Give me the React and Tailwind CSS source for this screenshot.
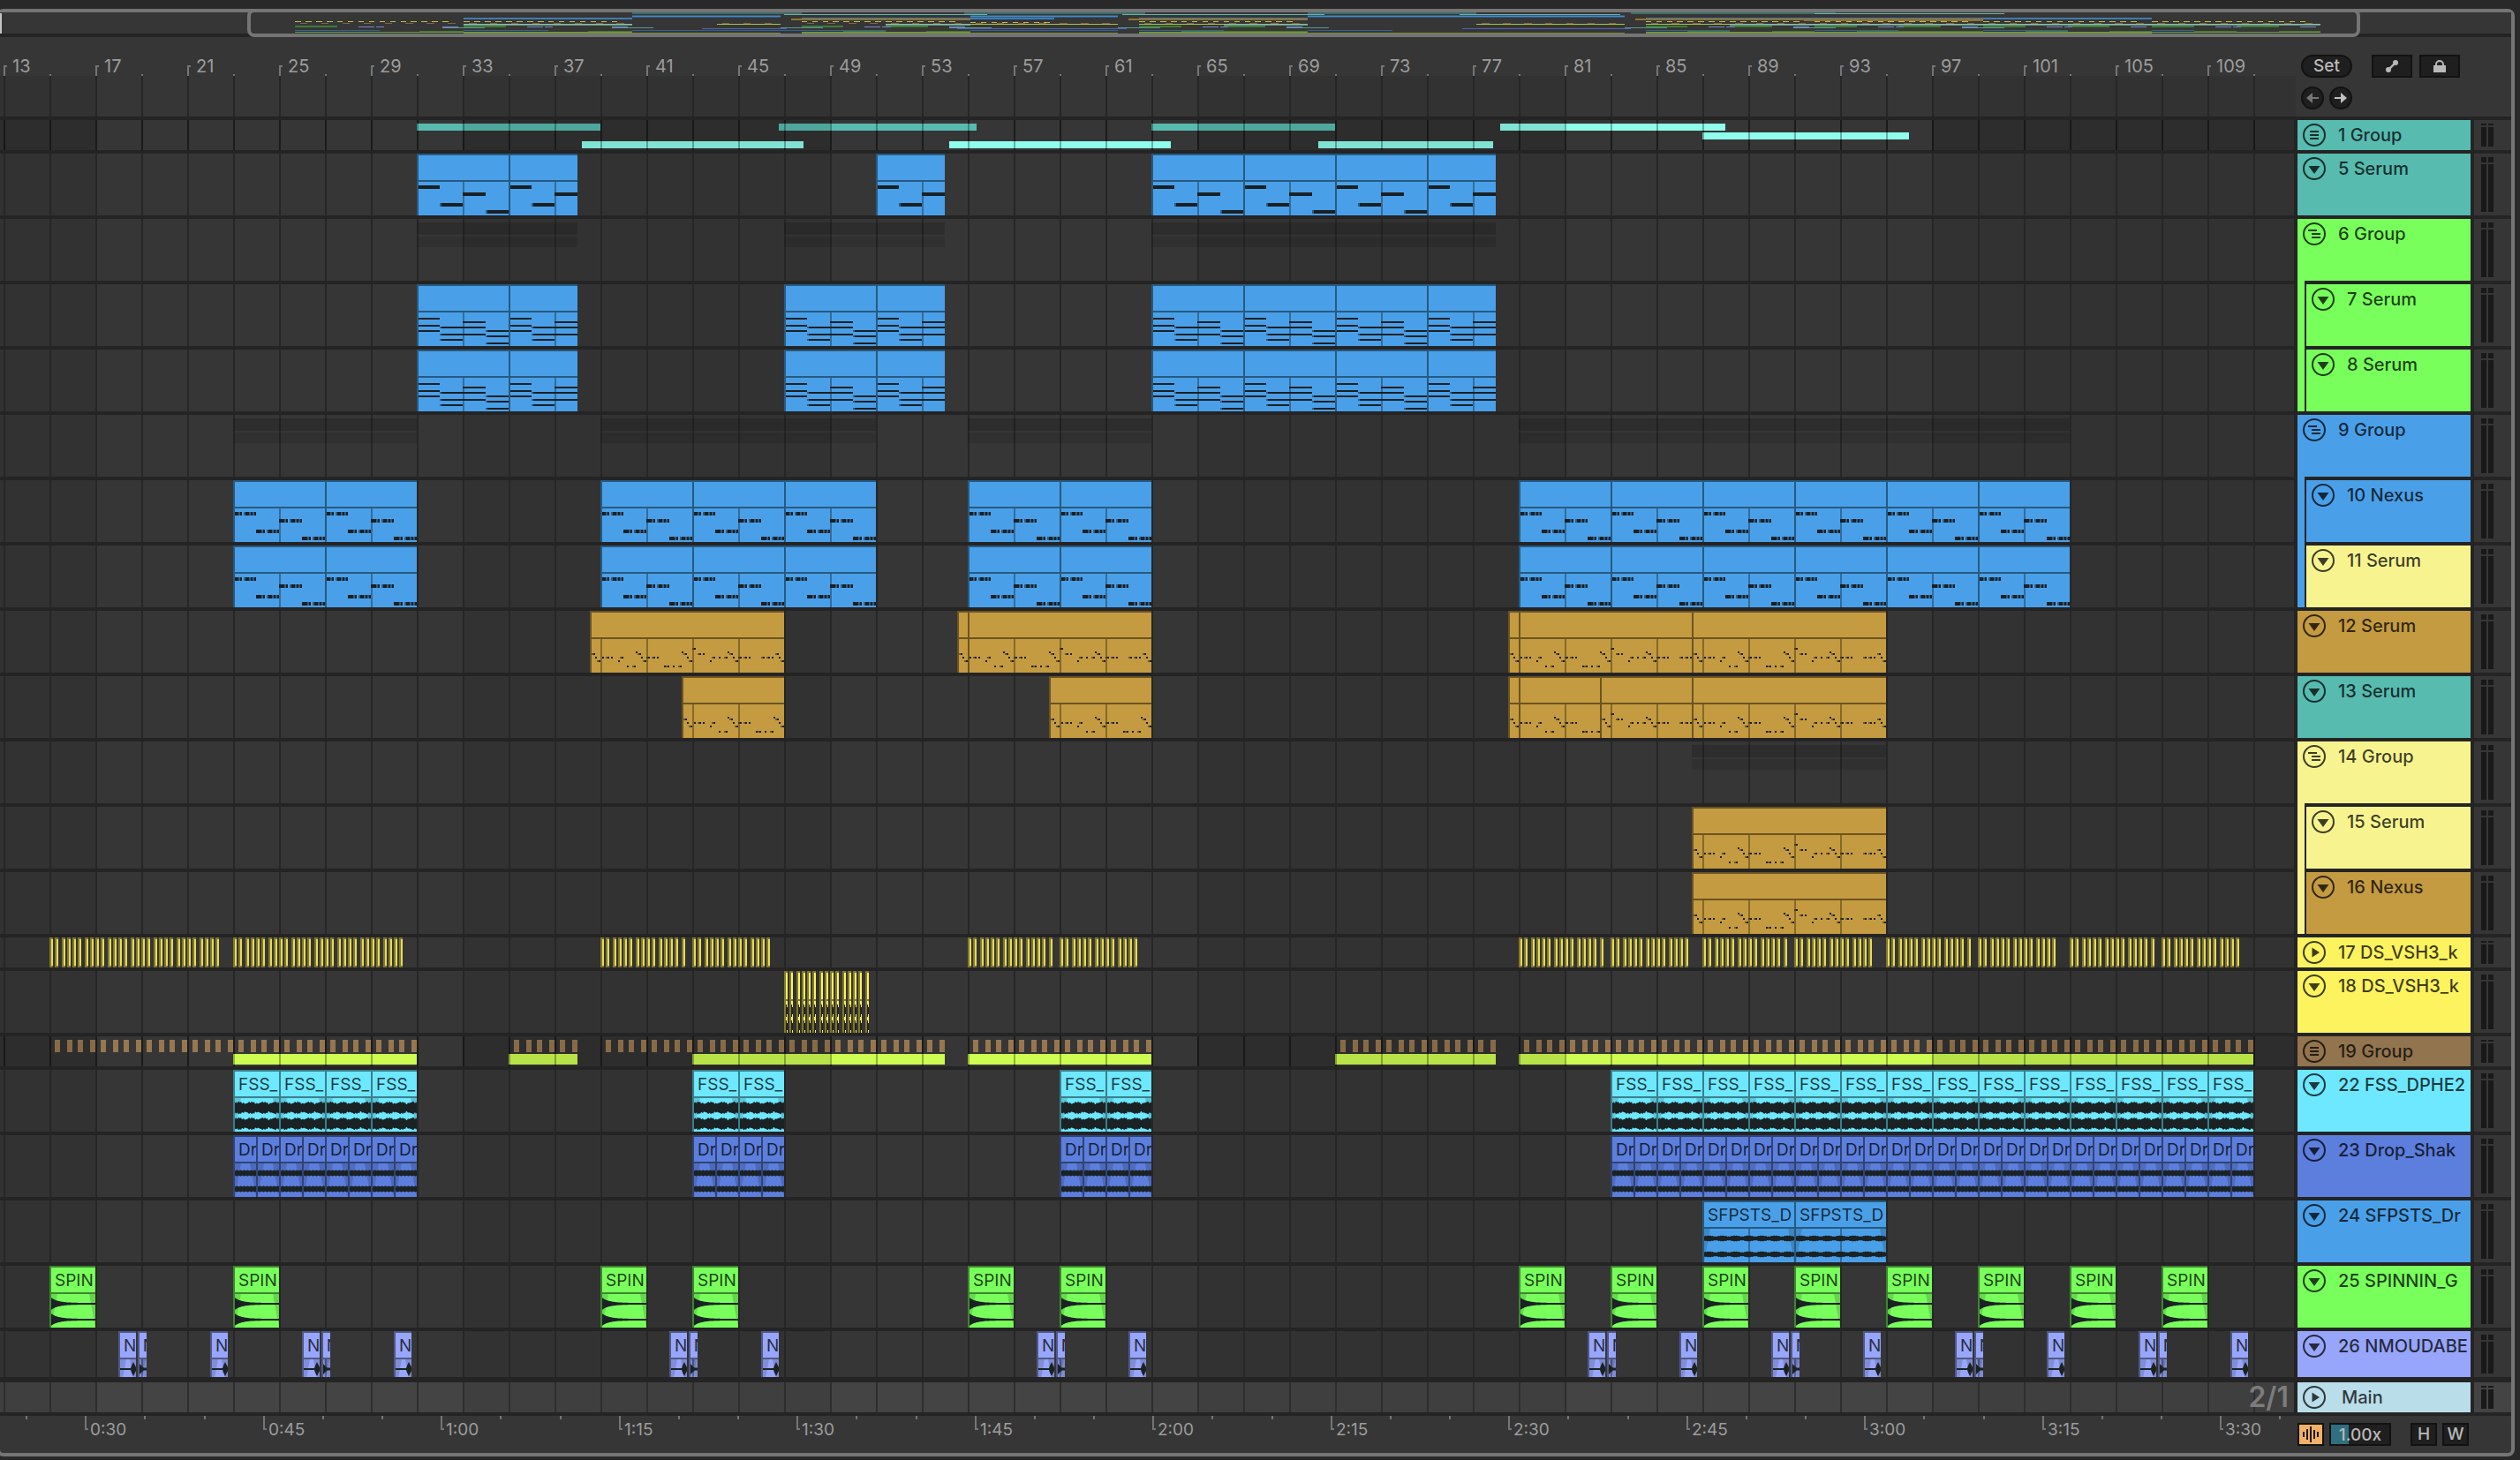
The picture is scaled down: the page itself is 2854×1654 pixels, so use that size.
import clsx from "clsx";

const BAR = 26;
const FIRST_BAR = 13;
const ORIGIN = 4;

const barX = (bar) => ORIGIN + (bar - FIRST_BAR) * BAR;
const even = (n) => Math.round(n / 2) * 2;

const GRID =
  "bg-[repeating-linear-gradient(90deg,transparent_0_4px,#262626_4px_6px,transparent_6px_52px),repeating-linear-gradient(90deg,#323232_0_108px,#363636_108px_524px,#323232_524px_832px)]";
const GRID_MAIN =
  "bg-[repeating-linear-gradient(90deg,transparent_0_4px,#2e2e2e_4px_6px,transparent_6px_52px),repeating-linear-gradient(90deg,#3f3f3f_0_108px,#444444_108px_524px,#3f3f3f_524px_832px)]";
// laid over group overviews, where the grid shows through the clips
const GRID_OVERLAY =
  "bg-[repeating-linear-gradient(90deg,transparent_0_4px,rgba(0,0,0,0.3)_4px_6px,transparent_6px_52px),repeating-linear-gradient(90deg,rgba(0,0,0,0.1)_0_108px,transparent_108px_524px,rgba(0,0,0,0.1)_524px_832px)]";

const TONES = {
  teal: "bg-[#57bbb0]",
  green: "bg-[#79ff5b]",
  blue: "bg-[#4aa0e8]",
  cream: "bg-[#f7f490]",
  gold: "bg-[#c49b40]",
  yellow: "bg-[#fcf35f]",
  brown: "bg-[#92744f]",
  cyan: "bg-[#6ee8ff]",
  indigo: "bg-[#5c7edd]",
  lilac: "bg-[#97a6fa]",
  ice: "bg-[#b9dde9]",
};

const EDGES = {
  blue: "border-[#265a80]",
  gold: "border-[#6b5423]",
  cyan: "border-[#3a7f8c]",
  indigo: "border-[#304376]",
  green: "border-[#3f8530]",
  lilac: "border-[#505886]",
};

/* ---------- notes and waveforms ---------- */

// [x, y, width, height, dim?], x counted from the start of the pattern
const BASS = {
  bars: 4,
  notes: [
    [0, 36, 26, 4], [26, 56, 2, 4, 1], [28, 56, 24, 4],
    [52, 44, 26, 4], [78, 64, 2, 4, 1], [80, 64, 24, 4],
  ],
};

const chord = (x, ys, pick) =>
  ys.flatMap((y) => (pick ? [[x, y, 2, 2, 1], [x + 2, y, 24, 2]] : [[x, y, 26, 2]]));

const CHORDS = {
  bars: 4,
  notes: [
    ...chord(0, [38, 46, 52]),
    ...chord(26, [48, 56, 62], true),
    ...chord(52, [42, 48, 56]),
    ...chord(78, [52, 58, 66], true),
  ],
};

const stabs = (x, y) => [
  [x, y, 6, 4], [x + 6, y, 2, 4, 1], [x + 8, y, 2, 4], [x + 12, y, 2, 4, 1], [x + 14, y, 4, 4],
  [x + 18, y, 2, 4, 1], [x + 20, y, 2, 4], [x + 22, y, 2, 4, 1], [x + 24, y, 2, 4],
];

const STABS = {
  bars: 4,
  notes: [...stabs(0, 36), ...stabs(26, 56), ...stabs(52, 44), ...stabs(78, 64)],
};

const LEAD_ON = [
  [2, 52], [8, 52], [12, 52], [20, 56], [24, 52], [30, 62], [38, 62], [40, 46], [44, 48], [46, 52],
  [50, 56], [54, 52], [60, 52], [64, 52], [72, 62], [76, 62], [82, 62], [90, 62], [92, 46], [96, 48],
  [98, 52], [102, 56], [106, 42], [112, 48], [116, 48], [124, 56], [128, 52], [134, 52], [142, 52],
  [144, 46], [148, 48], [150, 52], [154, 56], [158, 52], [164, 52], [168, 52], [184, 52], [190, 52],
  [194, 52], [200, 48], [202, 52], [206, 56],
];
const LEAD_DIM = [
  [6, 52], [22, 52], [36, 62], [42, 48], [48, 56], [52, 52], [58, 52], [74, 62], [88, 62], [94, 48],
  [100, 56], [104, 42], [110, 48], [126, 52], [140, 52], [146, 48], [152, 56], [156, 52], [162, 52],
  [182, 52], [188, 52], [198, 48], [204, 56],
];

const LEAD = {
  bars: 8,
  notes: [
    ...LEAD_ON.map(([x, y]) => [x, y, 2, 2]),
    ...LEAD_DIM.map(([x, y]) => [x, y, 2, 2, 1]),
  ],
};

function Notes({ pattern, from, to, anchor }) {
  const width = (to - from) * BAR;
  const loop = pattern.bars * BAR;
  const shift = (from - anchor) * BAR;
  const start = Math.floor(shift / loop);
  const end = Math.ceil((shift + width) / loop);
  const rects = [];
  for (let n = start; n < end; n++) {
    pattern.notes.forEach(([x, y, w, h, dim], i) => {
      const left = n * loop + x - shift;
      if (left + w > 2 && left < width) {
        const cut = Math.max(left, 2);
        rects.push(
          <rect key={`${n}-${i}`} x={cut} y={y} width={w - (cut - left)} height={h} fill={dim ? "rgba(0,0,0,0.42)" : "#1a2023"} />
        );
      }
    });
  }
  return (
    <svg className="absolute left-0 top-0 h-full w-full" shapeRendering="crispEdges">
      {rects}
    </svg>
  );
}

// symmetric outline round a centre line
function outline(width, mid, amp) {
  const top = [];
  const bottom = [];
  for (let x = 2; x <= width; x++) {
    const a = amp(x, width);
    top.push(`${x},${(mid - a).toFixed(1)}`);
    bottom.unshift(`${x},${(mid + a).toFixed(1)}`);
  }
  return [...top, ...bottom].join(" ");
}

const WAVES = {
  fss: {
    mids: [43, 61],
    amp: (x) => 4.2 + 2.2 * Math.abs(Math.sin(x * 0.23)) + (x % 3 === 0 ? 1 : 0) - (x % 5 === 0 ? 1 : 0),
  },
  drop: { mids: [43, 61], amp: (x) => 2.7 + (x % 4 < 2 ? 0.8 : 0) },
  loop: { mids: [43, 61], amp: (x) => 1.8 + 1.2 * Math.abs(Math.sin(x * 0.21)) + (x % 3 === 0 ? 0.6 : 0) },
  spin: { mids: [43, 61], amp: (x) => 1 + 7.5 * Math.exp(-x / 8) },
  hit: { mids: [43], amp: (x, w) => (w < 14 ? Math.max(1.5, 8 - x) : x > w - 6 ? 8 - 2 * Math.abs(w - 3 - x) : 1) },
};

function Wave({ kind, width }) {
  const { mids, amp } = WAVES[kind];
  return (
    <svg className="absolute left-0 top-0 h-full w-full">
      <polygon points="2,32 9,32 2,70" fill="rgba(0,0,0,0.14)" />
      <polygon points={`${width - 7},32 ${width},32 ${width},70`} fill="rgba(0,0,0,0.16)" />
      {mids.map((mid) => (
        <polygon key={mid} points={outline(width, mid, amp)} fill="#1a2224" />
      ))}
    </svg>
  );
}

/* ---------- clips ---------- */

function Clip({ from, to, tone, label, children }) {
  const width = (to - from) * BAR;
  const lines = [];
  for (let b = Math.ceil(from); b < to; b++) {
    if (b % 2 === 1 && b > from) lines.push((b - from) * BAR);
  }
  return (
    <div
      className={clsx("absolute top-0 h-full overflow-hidden", TONES[tone])}
      style={{ left: barX(from), width: Math.round(width) }}
    >
      <div className={clsx("absolute inset-0 border-l-2 border-t-2", EDGES[tone])}>
        <div className={clsx("h-[30px] border-b-2 pl-1 pt-0.5 text-[19px] leading-[26px] whitespace-nowrap text-black/75", EDGES[tone])}>
          {label}
        </div>
      </div>
      <svg className="absolute left-0 top-0 h-full w-full" shapeRendering="crispEdges">
        {lines.map((x) => (
          <rect key={x} x={x} y="32" width="2" height="38" fill="rgba(0,0,0,0.32)" />
        ))}
      </svg>
      {children}
    </div>
  );
}

function MidiClips({ cuts, tone, pattern }) {
  return cuts.map((run) =>
    run.slice(1).map((to, i) => (
      <Clip key={to} from={run[i]} to={to} tone={tone}>
        <Notes pattern={pattern} from={run[i]} to={to} anchor={Math.ceil(run[0])} />
      </Clip>
    ))
  );
}

function AudioClips({ spans, tone, label, wave }) {
  return spans.map(([from, to]) => (
    <Clip key={from} from={from} to={to} tone={tone} label={label}>
      <Wave kind={wave} width={Math.round((to - from) * BAR)} />
    </Clip>
  ));
}

const split = (from, to, step) => {
  const out = [];
  for (let b = from; b < to; b += step) out.push([b, b + step]);
  return out;
};

const beats = (from, count, step = 0.25) => Array.from({ length: count }, (_, i) => from + i * step);

const SERUM_RUNS = [[31, 35, 38], [47, 51, 54], [63, 67, 71, 75, 78]];
const NEXUS_RUNS = [
  [23, 27, 31], [39, 43, 47, 51], [55, 59, 63], [79, 83, 87, 91, 95, 99, 103],
];

const KICKS = [
  ...beats(15, 30), ...beats(23, 30),
  ...[39, 55, 79, 87, 95, 103].flatMap((b) => [...beats(b, 15), ...beats(b + 4, 14)]),
];
const CLAPS = [[15, 31], [35, 38], [39, 54], [55, 63], [71, 78], [79, 111]].flatMap(([a, b]) =>
  beats(a + 0.25, (b - a) * 2, 0.5)
);
const HATS = [[23, 31], [35, 38], [43, 54], [55, 63], [71, 78], [79, 111]];
const LOOPS = [[23, 31], [43, 47], [59, 63], [83, 111]];
const SPINS = [15, 23, 39, 43, 55, 59, 79, 83, 87, 91, 95, 99, 103, 107];
const HITS = [
  ...[18, 26, 42, 58, 82, 90, 98, 106].flatMap((b) => [[b, b + 0.76], [b + 0.84, b + 1.23]]),
  ...[22, 30, 46, 62, 86, 94, 102, 110].map((b) => [b, b + 0.76]),
];

const GROUP_TOP = [
  [31, 39, 4, 0], [46.75, 55.35, 4, 0], [63, 71, 4, 0], [78.2, 88, 4, 1],
  [87, 96, 14, 1], [38.2, 47.85, 24, 1], [54.2, 63.85, 24, 1], [70.25, 77.85, 24, 1],
];

function GroupLane({ children }) {
  return (
    <>
      {children}
      <div className={clsx("absolute inset-0", GRID_OVERLAY)} />
    </>
  );
}

function Ghosts({ spans }) {
  return spans.map(([from, to]) => (
    <div key={from} className="absolute top-1 flex flex-col gap-0.5" style={{ left: barX(from), width: (to - from) * BAR }}>
      <div className="h-3.5 bg-black/15" />
      <div className="h-3 bg-black/10" />
    </div>
  ));
}

const LANES = {
  1: (
    <GroupLane>
      {GROUP_TOP.map(([from, to, top, bright]) => (
        <div
          key={from}
          className={clsx("absolute h-2", bright ? "bg-[#8efdeb]" : "bg-[#57bbb0]")}
          style={{ left: Math.round(barX(from)), top, width: Math.round((to - from) * BAR) }}
        />
      ))}
    </GroupLane>
  ),
  5: <MidiClips cuts={[[31, 35, 38], [51, 54], [63, 67, 71, 75, 78]]} tone="blue" pattern={BASS} />,
  6: <Ghosts spans={[[31, 38], [47, 54], [63, 78]]} />,
  7: <MidiClips cuts={SERUM_RUNS} tone="blue" pattern={CHORDS} />,
  8: <MidiClips cuts={SERUM_RUNS} tone="blue" pattern={CHORDS} />,
  9: <Ghosts spans={[[23, 31], [39, 51], [55, 63], [79, 103]]} />,
  10: <MidiClips cuts={NEXUS_RUNS} tone="blue" pattern={STABS} />,
  11: <MidiClips cuts={NEXUS_RUNS} tone="blue" pattern={STABS} />,
  12: <MidiClips cuts={[[38.54, 47], [54.54, 55, 63], [78.54, 79, 86.54, 95]]} tone="gold" pattern={LEAD} />,
  13: <MidiClips cuts={[[42.54, 47], [58.54, 63], [78.54, 79, 82.54, 86.54, 95]]} tone="gold" pattern={LEAD} />,
  14: <Ghosts spans={[[86.54, 95]]} />,
  15: <MidiClips cuts={[[86.54, 95]]} tone="gold" pattern={LEAD} />,
  16: <MidiClips cuts={[[86.54, 95]]} tone="gold" pattern={LEAD} />,
  17: KICKS.map((b) => (
    <div
      key={b}
      className="absolute top-0 h-full w-1 border-y-2 border-l-2 border-[#80772f] bg-[#e6dc55]"
      style={{ left: even(barX(b)) }}
    />
  )),
  18: beats(47, 15).map((b) => (
    <div key={b} className="absolute top-0 h-full w-1 border-l-2 border-t-2 border-[#80772f] bg-[#fcf35f]" style={{ left: even(barX(b)) }}>
      <div className="h-[32px] border-b-2 border-[#80772f]" />
      <svg className="block h-[36px] w-0.5">
        <path d="M0 4h1v3h1v8h-1v3h-1z M0 22h1v3h1v8h-1v3h-1z" fill="#26260f" />
      </svg>
    </div>
  )),
  19: (
    <GroupLane>
      {CLAPS.map((b) => (
        <div key={b} className="absolute top-1 h-3.5 w-1.5 bg-[#96774f]" style={{ left: even(barX(b)) }} />
      ))}
      {HATS.map(([from, to]) => (
        <div key={from} className="absolute top-5 h-3 bg-[#cdfd50]" style={{ left: barX(from), width: (to - from) * BAR }} />
      ))}
    </GroupLane>
  ),
  22: <AudioClips spans={LOOPS.flatMap(([a, b]) => split(a, b, 2))} tone="cyan" label="FSS_" wave="fss" />,
  23: <AudioClips spans={LOOPS.flatMap(([a, b]) => split(a, b, 1))} tone="indigo" label="Dr" wave="drop" />,
  24: <AudioClips spans={[[87, 91], [91, 95]]} tone="blue" label="SFPSTS_D" wave="loop" />,
  25: <AudioClips spans={SPINS.map((b) => [b, b + 2])} tone="green" label="SPIN" wave="spin" />,
  26: <AudioClips spans={HITS} tone="lilac" label="N" wave="hit" />,
};

/* ---------- tracks ---------- */

const TRACKS = [
  { id: 1, name: "1 Group", tone: "teal", icon: "closed", height: "short" },
  { id: 5, name: "5 Serum", tone: "teal", icon: "down" },
  {
    id: 6, name: "6 Group", tone: "green", icon: "open",
    children: [
      { id: 7, name: "7 Serum", tone: "green", icon: "down" },
      { id: 8, name: "8 Serum", tone: "green", icon: "down" },
    ],
  },
  {
    id: 9, name: "9 Group", tone: "blue", icon: "open",
    children: [
      { id: 10, name: "10 Nexus", tone: "blue", icon: "down" },
      { id: 11, name: "11 Serum", tone: "cream", icon: "down" },
    ],
  },
  { id: 12, name: "12 Serum", tone: "gold", icon: "down" },
  { id: 13, name: "13 Serum", tone: "teal", icon: "down" },
  {
    id: 14, name: "14 Group", tone: "cream", icon: "open",
    children: [
      { id: 15, name: "15 Serum", tone: "cream", icon: "down" },
      { id: 16, name: "16 Nexus", tone: "gold", icon: "down" },
    ],
  },
  { id: 17, name: "17 DS_VSH3_k", tone: "yellow", icon: "right", height: "short" },
  { id: 18, name: "18 DS_VSH3_k", tone: "yellow", icon: "down" },
  { id: 19, name: "19 Group", tone: "brown", icon: "closed", height: "short" },
  { id: 22, name: "22 FSS_DPHE2", tone: "cyan", icon: "down" },
  { id: 23, name: "23 Drop_Shak", tone: "indigo", icon: "down" },
  { id: 24, name: "24 SFPSTS_Dr", tone: "blue", icon: "down" },
  { id: 25, name: "25 SPINNIN_G", tone: "green", icon: "down" },
  { id: 26, name: "26 NMOUDABE", tone: "lilac", icon: "down", height: "medium" },
];

const FLAT = TRACKS.flatMap((t) => [t, ...(t.children || [])]);

const HEIGHTS = { short: "h-[34px]", medium: "h-[52px]", tall: "h-[70px]" };
const heightOf = (track) => HEIGHTS[track.height || "tall"];

const FOLDS = {
  down: <path d="M6.5 10h13L13 19z" fill="currentColor" />,
  right: <path d="M10.5 7.5v11L19 13z" fill="currentColor" />,
  closed: <path d="M8 9h10M8 13h10M8 17h10" stroke="currentColor" strokeWidth="2" />,
  open: <path d="M6 9h10M10 13h10M10 17h10" stroke="currentColor" strokeWidth="2" />,
};

function TrackHeader({ track, main }) {
  return (
    <div className={clsx("flex items-start overflow-hidden text-black/75", TONES[track.tone], heightOf(track))}>
      <div className={clsx("flex items-center pl-1.5 pt-1", main ? "gap-[18px]" : "gap-3.5")}>
        <button aria-label={`Fold ${track.name}`} className="size-[26px] shrink-0">
          <svg viewBox="0 0 26 26" className="block size-[26px]" fill="none">
            <circle cx="13" cy="13" r="12" stroke="currentColor" strokeWidth="2" />
            {FOLDS[track.icon]}
          </svg>
        </button>
        <span className="whitespace-nowrap text-[20px] font-medium leading-[26px]">{track.name}</span>
      </div>
    </div>
  );
}

function TrackBlock({ track }) {
  if (!track.children) return <TrackHeader track={track} />;
  return (
    <div className={TONES[track.tone]}>
      <TrackHeader track={track} />
      <div className="ml-2 flex flex-col gap-1 bg-[#242424] pl-0.5 pt-1">
        {track.children.map((child) => (
          <TrackHeader key={child.id} track={child} />
        ))}
      </div>
    </div>
  );
}

function Meter({ height, main }) {
  return (
    <div className={clsx("flex gap-0.5 py-1 pl-2", main ? "bg-[#444444]" : "bg-[#363636]", HEIGHTS[height || "tall"])}>
      {[0, 1].map((n) => (
        <div key={n} className="flex w-1.5 flex-col gap-0.5">
          <div className={clsx("bg-[#191919]", height === "short" ? "h-0.5" : "h-1.5")} />
          <div className="flex-1 bg-[#191919]" />
        </div>
      ))}
    </div>
  );
}

/* ---------- overview ---------- */

const pulses = (list, len) => list.map((b) => [b, b + len]);

const OVERVIEW = [
  { y: 0, h: 2, fill: "#3e6c67", spans: [[31, 39], [46.7, 55.3], [63, 71], [78.3, 88]] },
  { y: 2, h: 1, fill: "#68b3ab", spans: [[38.2, 47.8], [54.2, 63.8], [70.2, 77.8]] },
  { y: 1, h: 1, fill: "#68b3ab", spans: [[87, 96]] },
  { y: 3, h: 3, fill: "#315d80", spans: [[31, 38], [47, 54], [63, 78]] },
  { y: 4, h: 1, fill: "#468ac4", spans: [[31, 38], [47, 54], [63, 78]] },
  { y: 6, h: 2, fill: "#3d7cb3", spans: [[23, 31], [39, 51], [55, 63], [79, 103]] },
  { y: 7, h: 2, fill: "#8f7232", spans: [[38.5, 47], [54.5, 63], [78.5, 95]] },
  { y: 9, h: 1, fill: "#8f7232", spans: [[86.5, 95]] },
  { y: 10, h: 1, fill: "#c2ba4c", spans: pulses(KICKS.filter((b) => b % 0.5 === 0), 0.28) },
  { y: 11, h: 1, fill: "#c2ba4c", spans: pulses(beats(47, 8, 0.5), 0.28) },
  { y: 12, h: 1, fill: "#80643f", spans: pulses(CLAPS.filter((b) => b % 1 === 0.25), 0.35) },
  { y: 13, h: 1, fill: "#a5bf4b", spans: HATS },
  { y: 14, h: 1, fill: "#4f8fd0", spans: LOOPS },
  { y: 15, h: 2, fill: "#3f7a38", spans: SPINS.map((b) => [b, b + 2]) },
  { y: 16, h: 1, fill: "#7784c8", spans: HITS },
  { y: 17, h: 1, fill: "#5a9496", spans: [22, 30, 38, 46, 54, 62, 78, 86, 94].map((b) => [b, b + 2]) },
  { y: 18, h: 1, fill: "#4e63b8", spans: [[34.3, 38.3], [46.4, 54.4], [70.3, 78.3]] },
  { y: 20, h: 1, fill: "#2e6396", spans: [[15, 19], [23, 27], [31, 43], [47, 54], [55, 59], [63, 67], [79, 83], [87, 91], [95, 99], [103, 105]] },
  { y: 21, h: 1, fill: "#4a7434", spans: [[20.9, 23], [28.9, 31], [41, 43], [44.9, 47], [57, 63], [81, 83], [85, 87], [89, 95], [97, 99], [101, 103], [105, 107], [109, 111]] },
  { y: 22, h: 1, fill: "#5fa23c", spans: [[15, 31], [39, 47], [55, 63], [79, 111]] },
  { y: 23, h: 1, fill: "#7a8536", spans: [[23, 38], [39, 54], [55, 78], [79, 103]] },
];

const overviewX = (bar) => 334 + (bar - 15) * 23.9;

function Overview() {
  return (
    <div className="relative h-7 border-b-4 border-[#242424] bg-[#363636]">
      <svg className="block h-6 w-full" viewBox="0 0 2844 24" preserveAspectRatio="none" shapeRendering="crispEdges">
        <rect x="0" y="1" width="2" height="23" fill="#c4c4c4" />
        {OVERVIEW.map((row, r) =>
          row.spans.map(([a, b], i) => (
            <rect key={`${r}-${i}`} x={overviewX(a)} y={row.y} width={(b - a) * 23.9} height={row.h} fill={row.fill} />
          ))
        )}
      </svg>
      <div className="absolute -top-1 left-[280px] right-[171px] h-8 rounded-lg border-4 border-[#757575]" />
    </div>
  );
}

/* ---------- rulers ---------- */

const BAR_LABELS = Array.from({ length: 25 }, (_, i) => FIRST_BAR + i * 4);

function BarRuler() {
  return (
    <div className="flex h-11 overflow-hidden pl-1">
      {BAR_LABELS.map((bar) => (
        <div key={bar} className="grid w-[104px] shrink-0 grid-cols-2 items-end">
          <div className="flex items-end">
            <span className="h-3 w-1 border-l-2 border-t-2 border-[#757575]" />
            <span className="ml-1.5 text-[20px] leading-[22px] text-[#9c9c9c]">{bar}</span>
          </div>
          <span className="h-0.5 w-0.5 bg-[#757575]" />
        </div>
      ))}
    </div>
  );
}

const tickX = (k) => Math.round(30 + k * 67.17);
const stamp = (s) => `${Math.floor(s / 60)}:${String(s % 60).padStart(2, "0")}`;

function TimeRuler() {
  return (
    <div className="flex h-[42px] min-w-0 flex-1 overflow-hidden pl-[29px]">
      {Array.from({ length: 39 }, (_, k) => (
        <div key={k} className="flex shrink-0 items-start" style={{ width: tickX(k + 1) - tickX(k) }}>
          {k % 3 === 1 ? (
            <>
              <span className="h-4 w-1 border-b-2 border-l-2 border-[#757575]" />
              <span className="ml-0.5 mt-1 text-[19px] leading-6 text-[#9c9c9c]">{stamp(25 + k * 5)}</span>
            </>
          ) : (
            <span className="h-1 w-0.5 bg-[#757575]" />
          )}
        </div>
      ))}
    </div>
  );
}

/* ---------- controls ---------- */

function SquareButton({ label, className, children }) {
  return (
    <button
      aria-label={label}
      className={clsx("flex h-[26px] items-center justify-center border-2 border-[#121212] bg-[#1f1f1f] text-[#b9b9b9]", className)}
    >
      {children}
    </button>
  );
}

function LocatorControls() {
  return (
    <div className="w-[244px] shrink-0 pl-1.5 pt-5">
      <div className="flex">
        <button className="h-[26px] w-[58px] rounded-full border-2 border-[#121212] bg-[#1f1f1f] text-[19px] font-medium leading-[22px] text-[#b9b9b9]">
          Set
        </button>
        <SquareButton label="Automation mode" className="ml-[22px] w-[46px]">
          <svg viewBox="0 0 16 16" className="size-4" fill="currentColor">
            <circle cx="12" cy="4" r="3" />
            <circle cx="4" cy="12" r="3" />
            <path d="M12 4L4 12" stroke="currentColor" strokeWidth="2.4" />
          </svg>
        </SquareButton>
        <SquareButton label="Lock envelopes" className="ml-2 w-[46px]">
          <svg viewBox="0 0 16 16" className="size-4" fill="none">
            <path d="M4 8V6a4 4 0 0 1 8 0V8" stroke="currentColor" strokeWidth="2" />
            <rect x="1" y="7" width="14" height="8" fill="currentColor" />
          </svg>
        </SquareButton>
      </div>
      <div className="mt-2.5 flex gap-1.5">
        <button aria-label="Previous locator" className="flex size-[26px] items-center justify-center rounded-full border-2 border-[#121212] bg-[#1f1f1f] text-[#757575]">
          <svg viewBox="0 0 14 14" className="size-3.5 shrink-0" fill="currentColor">
            <path d="M0 7l7-6v5h7v2H7v5z" />
          </svg>
        </button>
        <button aria-label="Next locator" className="flex size-[26px] items-center justify-center rounded-full border-2 border-[#121212] bg-[#1f1f1f] text-[#c0c0c0]">
          <svg viewBox="0 0 14 14" className="size-3.5 shrink-0" fill="currentColor">
            <path d="M14 7L7 1v5H0v2h7v5z" />
          </svg>
        </button>
      </div>
    </div>
  );
}

function FooterControls() {
  return (
    <div className="flex w-[242px] shrink-0 pt-2 text-[19px] font-medium leading-5">
      <button aria-label="Waveform view" className="flex h-[26px] w-[30px] items-center justify-center border-2 border-[#121212] bg-[#f5b067]">
        <svg viewBox="0 0 18 18" className="h-[18px] w-[18px]">
          <path d="M1 6v6M5 3v12M9 0v18M13 4v10M17 6v6" stroke="#1a1a1a" strokeWidth="2" />
        </svg>
      </button>
      <input
        aria-label="Waveform zoom"
        defaultValue="1.00x"
        className="ml-1.5 h-[26px] w-[70px] border-2 border-[#121212] bg-[linear-gradient(90deg,#2f6f80_0_20px,#1f1f1f_20px)] text-center text-[#b9b9b9]"
      />
      <SquareButton label="Optimize height" className="ml-[22px] w-[30px]">H</SquareButton>
      <SquareButton label="Optimize width" className="ml-1.5 w-[30px]">W</SquareButton>
    </div>
  );
}

export default function App() {
  return (
    <div className="min-h-screen overflow-hidden bg-[#292929] pb-1 pr-1.5 pt-2.5 font-['Inter','Liberation_Sans',sans-serif]">
      <div className="-ml-1 rounded-lg border-4 border-[#757575] bg-[#363636]">
        <Overview />

        <div className="flex">
          <div className="min-w-0 flex-1">
            <BarRuler />
            <div className={clsx("h-[46px]", GRID)} />
          </div>
          <LocatorControls />
        </div>

        <div className="flex gap-1 border-y-4 border-[#242424] bg-[#242424]">
          <div className="flex min-w-0 flex-1 flex-col gap-1">
            {FLAT.map((track) => (
              <div key={track.id} className={clsx("relative overflow-hidden", GRID, heightOf(track))}>
                {LANES[track.id]}
              </div>
            ))}
            <div className={clsx("mt-0.5 flex h-[34px] items-center justify-end pr-1.5 text-[32px] font-semibold leading-8 text-[#7c7c7c]", GRID_MAIN)}>
              2/1
            </div>
          </div>

          <div className="flex w-[196px] shrink-0 flex-col gap-1">
            {TRACKS.map((track) => (
              <TrackBlock key={track.id} track={track} />
            ))}
            <div className="mt-0.5">
              <TrackHeader main track={{ name: "Main", tone: "ice", icon: "right", height: "short" }} />
            </div>
          </div>

          <div className="flex w-[42px] shrink-0 flex-col gap-1">
            {FLAT.map((track) => (
              <Meter key={track.id} height={track.height} />
            ))}
            <div className="mt-0.5">
              <Meter height="short" main />
            </div>
          </div>
        </div>

        <div className="flex">
          <TimeRuler />
          <FooterControls />
        </div>
      </div>
    </div>
  );
}
